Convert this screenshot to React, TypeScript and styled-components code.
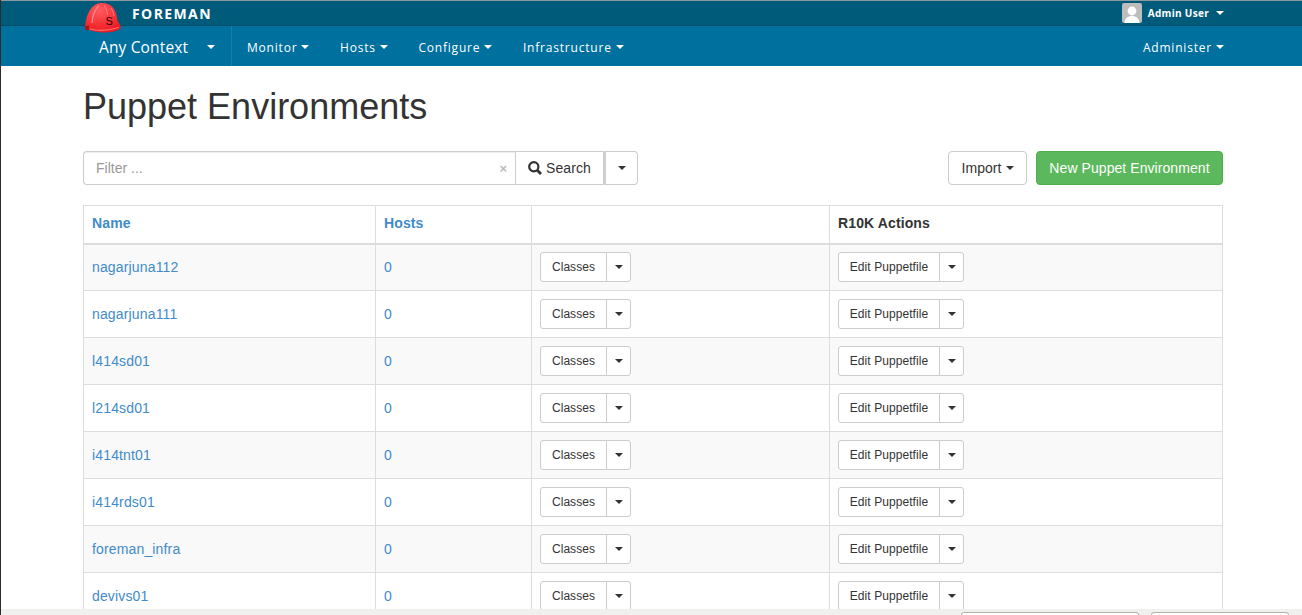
import styled, { createGlobalStyle } from 'styled-components';

const GlobalStyle = createGlobalStyle`
  html, body {
    margin: 0;
    height: 615px;
    overflow: hidden;
    background: #fff;
  }
  * {
    box-sizing: border-box;
  }
`;

const navFont = `'Open Sans', 'Noto Sans', sans-serif`;
const bodyFont = `'Liberation Sans', Arial, sans-serif`;

const Page = styled.div`
  height: 615px;
  overflow: hidden;
  border-left: 1px solid #2b2b2b;
  font-family: ${bodyFont};
  font-size: 14px;
  color: #333;
`;

const TopBar = styled.div`
  height: 26px;
  background: #005a7a;
  border-top: 1px solid #8a9a9f;
  border-bottom: 1px solid #004c68;
  display: flex;
  align-items: center;
  padding: 0 78px 0 83px;
  font-family: ${navFont};
  color: #fff;
`;

const Brand = styled.div`
  display: flex;
  align-items: center;
  flex: 1;
  font-size: 14px;
  font-weight: 700;
  letter-spacing: 1.4px;
  height: 24px;
`;

const BrandName = styled.span`
  margin-left: 48px;
`;

const Helmet = styled.svg`
  position: absolute;
  left: 84px;
  top: 2px;
  width: 38px;
  height: 33px;
`;

const UserMenu = styled.div`
  display: flex;
  align-items: center;
  font-size: 10px;
  font-weight: 700;
  letter-spacing: 0.3px;
`;

const Avatar = styled.svg`
  width: 20px;
  height: 20px;
  margin-right: 6px;
  border-radius: 2px;
`;

const Caret = styled.span<{ $color?: string; $gap?: number }>`
  display: inline-block;
  width: 0;
  height: 0;
  margin-left: ${(p) => p.$gap ?? 4}px;
  border-top: 4px solid ${(p) => p.$color ?? '#fff'};
  border-left: 4px solid transparent;
  border-right: 4px solid transparent;
`;

const MainBar = styled.div`
  height: 40px;
  background: #00709f;
  display: flex;
  align-items: center;
  padding: 0 78px 0 83px;
  font-family: ${navFont};
  color: #fff;
`;

const ContextMenu = styled.div`
  width: 148px;
  height: 40px;
  padding: 1px 0 0 15px;
  display: flex;
  align-items: center;
  font-size: 15.5px;
  letter-spacing: 0.15px;
  border-right: 1px solid #1081ad;
`;

const ContextCaret = styled(Caret)`
  margin-left: 19px;
`;

const NavItem = styled.div<{ $first?: boolean }>`
  display: flex;
  align-items: center;
  padding-top: 2px;
  font-size: 12px;
  font-weight: 500;
  letter-spacing: 0.8px;
  margin-left: ${(p) => (p.$first ? 15 : 30.6)}px;
`;

const Spacer = styled.div`
  flex: 1;
`;

const Content = styled.main`
  padding: 0 79px 0 82px;
`;

const Title = styled.h1`
  margin: 21px 0 25px;
  height: 39px;
  font-size: 36px;
  line-height: 39px;
  font-weight: 400;
  color: #333;
`;

const Toolbar = styled.div`
  display: flex;
  align-items: stretch;
  height: 34px;
  margin-bottom: 20px;
`;

const FilterBox = styled.div`
  width: 432px;
  display: flex;
  align-items: center;
  justify-content: space-between;
  padding: 0 8px 0 12px;
  border: 1px solid #ccc;
  border-right: 0;
  border-radius: 4px 0 0 4px;
  color: #999;
  box-shadow: inset 0 1px 1px rgba(0, 0, 0, 0.075);
`;

const ClearMark = styled.span`
  color: #bbb;
  font-size: 13px;
  font-weight: 700;
`;

const Button = styled.button<{ $small?: boolean; $side?: 'left' | 'right' | 'mid'; $w?: number }>`
  display: inline-flex;
  align-items: center;
  justify-content: center;
  width: ${(p) => (p.$w ? `${p.$w}px` : 'auto')};
  height: ${(p) => (p.$small ? '30px' : '34px')};
  padding: 0;
  font-family: ${bodyFont};
  font-size: ${(p) => (p.$small ? '12px' : '14px')};
  letter-spacing: 0.07px;
  color: #333;
  background: #fff;
  border: 1px solid #ccc;
  border-radius: ${(p) =>
    p.$side === 'left' ? '3px 0 0 3px' : p.$side === 'right' ? '0 3px 3px 0' : p.$side === 'mid' ? '0' : '4px'};
  margin-left: ${(p) => (p.$side === 'right' ? '-1px' : '0')};
`;

const SearchButton = styled(Button)`
  gap: 4px;
`;

const SearchCaretButton = styled(Button)`
  border-left-width: 2px;
  border-left-color: #d0d0d0;
  border-radius: 0 4px 4px 0;
`;

const ImportButton = styled(Button)`
  margin-left: auto;
`;

const NewButton = styled(Button)`
  margin-left: 9px;
  color: #fff;
  background: #5cb85c;
  border-color: #4cae4c;
`;

const Table = styled.table`
  width: 1139px;
  table-layout: fixed;
  border-collapse: collapse;
  border: 1px solid #ddd;
`;

const HeadCell = styled.th<{ $w: number }>`
  width: ${(p) => p.$w}px;
  height: 38px;
  padding: 0 8px 2px;
  text-align: left;
  font-weight: 700;
  line-height: 20px;
  letter-spacing: 0.12px;
  border: 1px solid #ddd;
  border-bottom: 2px solid #ddd;
`;

const Row = styled.tr<{ $odd: boolean }>`
  background: ${(p) => (p.$odd ? '#f9f9f9' : '#fff')};
`;

const Cell = styled.td`
  height: 47px;
  padding: 0 8px;
  border: 1px solid #ddd;
`;

const TableLink = styled.a`
  color: #428bca;
  text-decoration: none;
`;

const NameLink = styled(TableLink)`
  letter-spacing: 0.15px;
`;

const ButtonGroup = styled.div`
  display: flex;
`;

const StatusStrip = styled.div`
  position: fixed;
  left: 1px;
  right: 0;
  bottom: 0;
  height: 6px;
  background: #f0f0ee;
  overflow: hidden;
`;

const StripTab = styled.div<{ $x: number; $w: number }>`
  position: absolute;
  left: ${(p) => p.$x}px;
  top: 3px;
  width: ${(p) => p.$w}px;
  height: 12px;
  background: #fff;
  border: 1px solid #b5b0aa;
  border-radius: 3px;
`;

const environments = [
  'nagarjuna112',
  'nagarjuna111',
  'l414sd01',
  'l214sd01',
  'i414tnt01',
  'i414rds01',
  'foreman_infra',
  'devivs01',
];

export default function App() {
  return (
    <Page>
      <GlobalStyle />
      <TopBar>
        <Brand>
          <BrandName>FOREMAN</BrandName>
        </Brand>
        <UserMenu>
          <Avatar viewBox="0 0 20 20">
            <rect width="20" height="20" fill="#bdbdbd" />
            <circle cx="10" cy="8" r="4.4" fill="#fff" />
            <path d="M2.5 20c.4-4.6 3.4-7 7.5-7s7.1 2.4 7.5 7z" fill="#fff" />
          </Avatar>
          Admin User
          <Caret $gap={7} />
        </UserMenu>
      </TopBar>
      <Helmet viewBox="0 0 38 33">
        <defs>
          <radialGradient id="dome" cx="40%" cy="25%" r="85%">
            <stop offset="0%" stopColor="#ff5c60" />
            <stop offset="65%" stopColor="#f62a30" />
            <stop offset="100%" stopColor="#e2181e" />
          </radialGradient>
        </defs>
        <path
          d="M1 25C2 11 8 1.500 17 1c10-.5 15.500 6 16.500 17.500L37 24.500c.3 1.500-1.500 3-4 4-3 1.200-7 2-11 2-5 0-11-.6-15-2-3-1-6.500-1.500-6-3.500z"
          fill="url(#dome)"
        />
        <path d="M8 21C8.500 13 11 7 15 3.500" fill="none" stroke="#ff8a8a" strokeWidth="1.300" />
        <path d="M20 3c2 3 3.500 7 3.500 10M27 6c1.500 2.500 2.500 5 3 8" fill="none" stroke="#ff8080" strokeWidth="1" />
        <path d="M4 26.500c8 2.500 20 2.500 31-1" fill="none" stroke="#ff6a6a" strokeWidth="1.200" />
        <path d="M1 24.500l3.500-1.500 1 4.500-3.500 1z" fill="#b10f14" />
        <text x="21.500" y="23" fontSize="11" fontFamily="'Liberation Sans', sans-serif" fill="#1f0606">
          S
        </text>
      </Helmet>
      <MainBar>
        <ContextMenu>
          Any Context
          <ContextCaret />
        </ContextMenu>
        <NavItem $first>
          Monitor
          <Caret />
        </NavItem>
        <NavItem>
          Hosts
          <Caret />
        </NavItem>
        <NavItem>
          Configure
          <Caret />
        </NavItem>
        <NavItem>
          Infrastructure
          <Caret />
        </NavItem>
        <Spacer />
        <NavItem>
          Administer
          <Caret />
        </NavItem>
      </MainBar>
      <Content>
        <Title>Puppet Environments</Title>
        <Toolbar>
          <FilterBox>
            Filter ...
            <ClearMark>×</ClearMark>
          </FilterBox>
          <SearchButton $side="mid" $w={89}>
            <svg width="14" height="14" viewBox="0 0 14 14">
              <circle cx="5.8" cy="5.8" r="4.6" fill="none" stroke="#333" strokeWidth="2.2" />
              <path d="M9 9l4 4" stroke="#333" strokeWidth="2.8" />
            </svg>
            Search
          </SearchButton>
          <SearchCaretButton $side="mid" $w={34}>
            <Caret $color="#333" $gap={0} />
          </SearchCaretButton>
          <ImportButton $w={79}>
            Import
            <Caret $color="#333" />
          </ImportButton>
          <NewButton $w={187}>New Puppet Environment</NewButton>
        </Toolbar>
        <Table>
          <thead>
            <tr>
              <HeadCell $w={292}>
                <TableLink>Name</TableLink>
              </HeadCell>
              <HeadCell $w={156}>
                <TableLink>Hosts</TableLink>
              </HeadCell>
              <HeadCell $w={298} />
              <HeadCell $w={393}>R10K Actions</HeadCell>
            </tr>
          </thead>
          <tbody>
            {environments.map((name, i) => (
              <Row key={name} $odd={i % 2 === 0}>
                <Cell>
                  <NameLink>{name}</NameLink>
                </Cell>
                <Cell>
                  <TableLink>0</TableLink>
                </Cell>
                <Cell>
                  <ButtonGroup>
                    <Button $small $side="left" $w={67}>
                      Classes
                    </Button>
                    <Button $small $side="right" $w={25}>
                      <Caret $color="#333" $gap={0} />
                    </Button>
                  </ButtonGroup>
                </Cell>
                <Cell>
                  <ButtonGroup>
                    <Button $small $side="left" $w={102}>
                      Edit Puppetfile
                    </Button>
                    <Button $small $side="right" $w={25}>
                      <Caret $color="#333" $gap={0} />
                    </Button>
                  </ButtonGroup>
                </Cell>
              </Row>
            ))}
          </tbody>
        </Table>
      </Content>
      <StatusStrip>
        <StripTab $x={960} $w={178} />
        <StripTab $x={1150} $w={138} />
      </StatusStrip>
    </Page>
  );
}
